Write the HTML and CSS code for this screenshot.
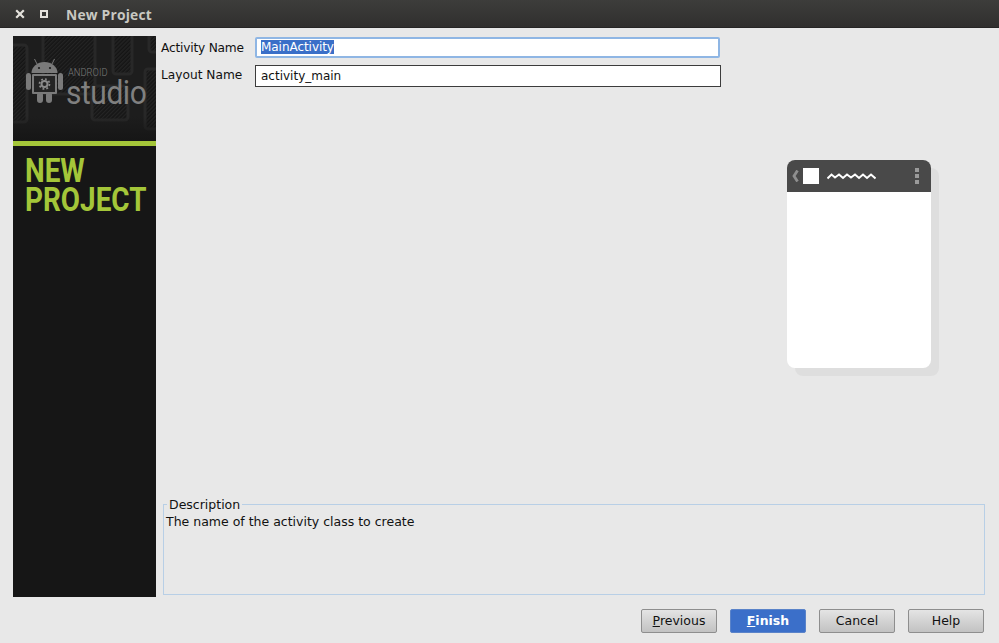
FILE: index.html
```html
<!DOCTYPE html>
<html lang="en">
<head>
<meta charset="utf-8">
<title>New Project</title>
<link rel="stylesheet" href="styles.css">
</head>
<body>
<div class="window">
  <header class="titlebar">
    <svg class="winbtn close" width="10" height="10" viewBox="0 0 10 10"><path d="M1.2 1.2L8.8 8.8M8.8 1.2L1.2 8.8" stroke="#e4e2dc" stroke-width="2.2" fill="none"/></svg>
    <svg class="winbtn max" width="8" height="8" viewBox="0 0 8 8"><rect x="1" y="1" width="6" height="6" stroke="#e4e2dc" stroke-width="2" fill="none"/></svg>
    <span class="title">New Project</span>
  </header>
  <div class="content">
    <div class="main">
      <aside class="sidebar">
        <div class="banner">
          <svg class="banner-art" width="143" height="105" viewBox="0 0 143 105">
            <defs>
              <pattern id="hatch" width="2.800" height="2.800" patternUnits="userSpaceOnUse" patternTransform="rotate(45)">
                <rect width="2.800" height="2.800" fill="#151515"/>
                <rect width="1.300" height="2.800" fill="#242424"/>
              </pattern>
              <linearGradient id="fade" x1="0" y1="0" x2="0" y2="1">
                <stop offset="0" stop-color="#161616" stop-opacity="0"/>
                <stop offset="1" stop-color="#161616"/>
              </linearGradient>
            </defs>
            <rect width="143" height="105" fill="#1d1d1d"/>
            <g fill="url(#hatch)" stroke="#282828" stroke-width="3">
              <rect x="-12" y="9" width="26" height="77" rx="3"/>
              <rect x="30" y="-12" width="52" height="70" rx="3"/>
              <rect x="100" y="-8" width="19" height="46" rx="3"/>
              <rect x="136" y="-8" width="20" height="24" rx="3"/>
              <rect x="132" y="33" width="20" height="60" rx="3"/>
              <rect x="79" y="50" width="36" height="34" rx="3"/>
            </g>
            <rect y="80" width="143" height="25" fill="url(#fade)"/>
            <g fill="#7a7a7a">
              <path d="M18.500 37a13 11 0 0 1 26 0z"/>
              <path d="M24 28l-2.500-5M39 28l2.500-5" stroke="#7a7a7a" stroke-width="1" fill="none"/>
              <rect x="13" y="37" width="5" height="17" rx="2.500"/>
              <rect x="45" y="37" width="5" height="17" rx="2.500"/>
              <rect x="19" y="38" width="25" height="20" rx="1"/>
              <rect x="24" y="56" width="6" height="11" rx="3"/>
              <rect x="33" y="56" width="6" height="11" rx="3"/>
            </g>
            <circle cx="26" cy="32" r="1.100" fill="#1c1c1c"/>
            <circle cx="37" cy="32" r="1.100" fill="#1c1c1c"/>
            <rect x="20.500" y="39.500" width="22" height="17" fill="#242424" stroke="#7a7a7a" stroke-width="1"/>
            <circle cx="31.500" cy="48" r="3" fill="none" stroke="#8a8a8a" stroke-width="2"/>
            <circle cx="31.500" cy="48" r="5" fill="none" stroke="#8a8a8a" stroke-width="1.700" stroke-dasharray="1.900 2"/>
          </svg>
          <span class="brand-small">ANDROID</span>
          <span class="brand-big">studio</span>
        </div>
        <div class="accent"></div>
        <h1 class="heading">NEW<br>PROJECT</h1>
      </aside>
      <section class="panel">
        <div class="form">
          <div class="row">
            <label class="label label-tight" for="activity">Activity Name</label>
            <div class="field field-focus" id="activity"><span class="selected">MainActivity</span></div>
          </div>
          <div class="row">
            <label class="label label-up" for="layout">Layout Name</label>
            <div class="field" id="layout">activity_main</div>
          </div>
        </div>
        <div class="preview">
          <div class="phone">
            <div class="phone-bar">
              <svg width="7" height="12" viewBox="0 0 7 12"><path d="M5.500 0.500L2 6L5.500 11.500" stroke="#8f8f8f" stroke-width="2.800" fill="none"/></svg>
              <div class="phone-icon"></div>
              <svg class="squiggle" width="49" height="9" viewBox="0 0 49 9"><path d="M0.500 6.500L4.500 2.500L8 5.500L12 2.500L16 6L20 2.500L24 5.500L28 2.500L32 6L36 2.500L40 6L44 2.500L48.500 6.500" stroke="#fff" stroke-width="2" fill="none"/></svg>
              <div class="phone-menu"><i></i><i></i><i></i></div>
            </div>
          </div>
        </div>
        <fieldset class="description">
          <legend class="legend">Description</legend>
          <p class="desc-text">The name of the activity class to create</p>
        </fieldset>
      </section>
    </div>
    <footer class="actions">
      <button class="btn"><u>P</u>revious</button>
      <button class="btn btn-primary"><u>F</u>inish</button>
      <button class="btn">Cancel</button>
      <button class="btn">Help</button>
    </footer>
  </div>
</div>
</body>
</html>
```
FILE: styles.css
```css
* { box-sizing: border-box; }
html, body { margin: 0; padding: 0; height: 100%; overflow: hidden; }
body { font-family: "DejaVu Sans", sans-serif; font-size: 12.5px; color: #111; background: #e8e8e8; }
.window { width: 999px; height: 643px; display: flex; flex-direction: column; }
.titlebar { height: 28px; flex: none; display: flex; align-items: center; background: linear-gradient(#3d3d3b, #302f2e); border-bottom: 1px solid #262525; padding-left: 15px; }
.winbtn { flex: none; }
.max { margin-left: 15px; }
.title { margin-left: 18px; padding-top: 2px; font-family: "Open Sans", sans-serif; font-weight: 700; font-size: 13.800px; color: #c8c8c2; letter-spacing: 0.2px; }
.content { flex: 1; display: flex; flex-direction: column; padding: 8px 14px 10px 13px; min-height: 0; }
.main { display: flex; height: 561px; flex: none; }
.sidebar { width: 143px; flex: none; background: #161616; }
.banner { height: 105px; position: relative; overflow: hidden; }
.banner-art { display: block; }
.brand-small { position: absolute; left: 55px; top: 31px; font-family: "Roboto", sans-serif; font-weight: 300; font-size: 11px; line-height: 12px; color: #7a7a7a; transform: scaleX(.85); transform-origin: left; }
.brand-big { position: absolute; left: 53px; top: 43px; font-family: "Roboto", sans-serif; font-weight: 400; font-size: 34px; line-height: 26px; color: #808080; letter-spacing: -.5px; transform: scaleX(.88); transform-origin: left; }
.accent { height: 5px; background: #a4c639; }
.heading { margin: 10px 0 0 12px; font-family: "Roboto", sans-serif; font-weight: 700; font-size: 33px; line-height: 29px; color: #a4c639; transform: scaleX(.845); transform-origin: left; white-space: nowrap; }
.panel { flex: 1; display: flex; flex-direction: column; min-width: 0; }
.form { display: flex; flex-direction: column; gap: 7px; padding: 1px 0 0 5px; height: 51px; flex: none; }
.row { display: flex; align-items: center; height: 22px; }
.label { width: 94px; flex: none; white-space: nowrap; font-size: 12.200px; }
.label-tight { letter-spacing: -.2px; }
.label-up { padding-bottom: 2px; }
.field { width: 466px; height: 22px; background: #fff; border: 1px solid #3c3c3c; padding: 0 5px; line-height: 20px; font-size: 12px; }
.field-focus { width: 465px; height: 21px; line-height: 16px; border: 2px solid #8fb6e4; border-radius: 2px; padding: 0 4px; letter-spacing: -.05px; }
.selected { background: #3a6fc8; color: #fff; display: inline-block; line-height: 14px; margin-top: 1px; }
.preview { flex: 1; padding: 73px 0 0 631px; }
.phone { width: 144px; height: 208px; background: #fff; border-radius: 8px; box-shadow: 8px 8px 0 #dedede; overflow: hidden; }
.phone-bar { height: 32px; background: #494949; display: flex; align-items: center; padding-left: 5px; }
.phone-icon { width: 16px; height: 16px; background: #fff; margin-left: 4px; }
.squiggle { margin-left: 8px; }
.phone-menu { margin-left: 39px; display: flex; flex-direction: column; gap: 2px; }
.phone-menu i { display: block; width: 4px; height: 4px; background: #9a9a9a; }
.description { margin: 0 0 2px 7px; padding: 2px 2px 0; width: 822px; height: 98px; flex: none; border: 1px solid #b8cfe6; min-width: 0; }
.legend { padding: 0 2px 0 2px; margin-left: 1px; line-height: 15px; }
.desc-text { margin: 0; line-height: 15px; }
.actions { flex: 1; display: flex; justify-content: flex-end; align-items: flex-start; gap: 13px; padding: 12px 1px 0 0; }
.btn { width: 76px; height: 24px; padding: 0 0 2px; font-family: "DejaVu Sans", sans-serif; font-size: 12.500px; color: #111; border: 1px solid #8e8e8e; border-radius: 2px; background: linear-gradient(#e4e4e4, #c2c2c2); }
.btn-primary { background: #3b6fc9; border-color: #5a83c9; color: #fff; font-weight: 700; }
```
